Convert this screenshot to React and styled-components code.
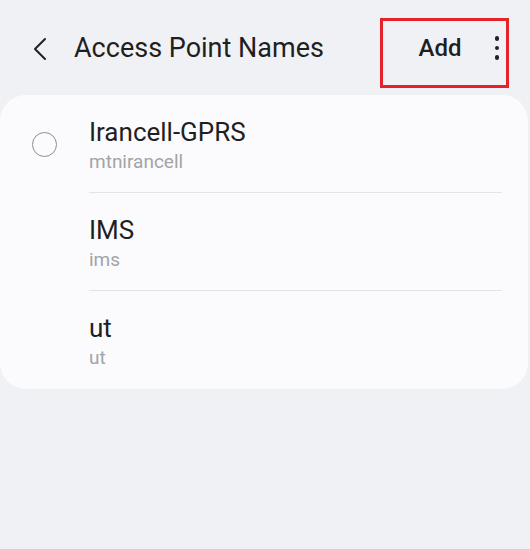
import React from "react";
import styled, { createGlobalStyle } from "styled-components";

const GlobalStyle = createGlobalStyle`
  html, body {
    margin: 0;
    padding: 0;
    background: #f0f1f5;
    font-family: Roboto, "Noto Sans", sans-serif;
  }
`;

const apns = [
  { name: "Irancell-GPRS", apn: "mtnirancell", radio: true },
  { name: "IMS", apn: "ims" },
  { name: "ut", apn: "ut" },
];

export default function App() {
  return (
    <Screen>
      <GlobalStyle />
      <Header>
        <BackButton aria-label="Back">
          <svg width="16" height="24" viewBox="0 0 16 24">
            <path d="M13 2 L3 12 L13 22" fill="none" stroke="#222" strokeWidth="2" strokeLinecap="round" strokeLinejoin="round" />
          </svg>
        </BackButton>
        <Title>Access Point Names</Title>
        <Actions>
          <AddButton>Add</AddButton>
          <MoreDots>
            <span />
            <span />
            <span />
          </MoreDots>
        </Actions>
      </Header>
      <Card>
        {apns.map((item, i) => (
          <Row key={item.name}>
            <RadioCell>{item.radio && <Radio />}</RadioCell>
            <RowText last={i === apns.length - 1}>
              <Name>{item.name}</Name>
              <Apn>{item.apn}</Apn>
            </RowText>
          </Row>
        ))}
      </Card>
    </Screen>
  );
}

const Screen = styled.div`
  width: 530px;
  height: 549px;
  background: #f0f1f5;
  overflow: hidden;
`;

const Header = styled.div`
  height: 95px;
  display: flex;
  align-items: center;
  padding-left: 32px;
  box-sizing: border-box;
`;

const BackButton = styled.div`
  width: 16px;
  height: 24px;
  display: flex;
  margin-right: 26px;
  margin-top: 2px;
`;

const Title = styled.div`
  font-size: 27px;
  color: #1f1f1f;
  flex: 1;
`;

const Actions = styled.div`
  box-sizing: border-box;
  width: 129px;
  height: 70px;
  margin-right: 21px;
  margin-top: 11px;
  border: 3px solid #e3222a;
  display: flex;
  align-items: center;
  justify-content: flex-end;
  padding-right: 7px;
  padding-bottom: 10px;
  gap: 33px;
`;

const AddButton = styled.div`
  font-size: 24px;
  font-weight: 500;
  color: #1f1f1f;
`;

const MoreDots = styled.div`
  display: flex;
  flex-direction: column;
  gap: 5px;
  span {
    width: 4.5px;
    height: 4.5px;
    border-radius: 50%;
    background: #222;
  }
`;

const Card = styled.div`
  margin: 0 2px 0 0;
  background: #fbfbfe;
  border-radius: 26px;
`;

const Row = styled.div`
  display: flex;
  height: 98px;
`;

const RadioCell = styled.div`
  width: 89px;
  display: flex;
  align-items: center;
  justify-content: center;
`;

const Radio = styled.div`
  width: 23px;
  height: 23px;
  border: 1.5px solid #8d8d8d;
  border-radius: 50%;
`;

const RowText = styled.div`
  flex: 1;
  margin-right: 26px;
  padding-top: 22px;
  display: flex;
  flex-direction: column;
  border-bottom: ${(p) => (p.last ? "none" : "1.5px solid #e4e4e8")};
`;

const Name = styled.div`
  font-size: 26px;
  color: #1f1f1f;
  line-height: 30px;
`;

const Apn = styled.div`
  font-size: 19px;
  color: #a3a3a7;
  line-height: 29px;
`;
